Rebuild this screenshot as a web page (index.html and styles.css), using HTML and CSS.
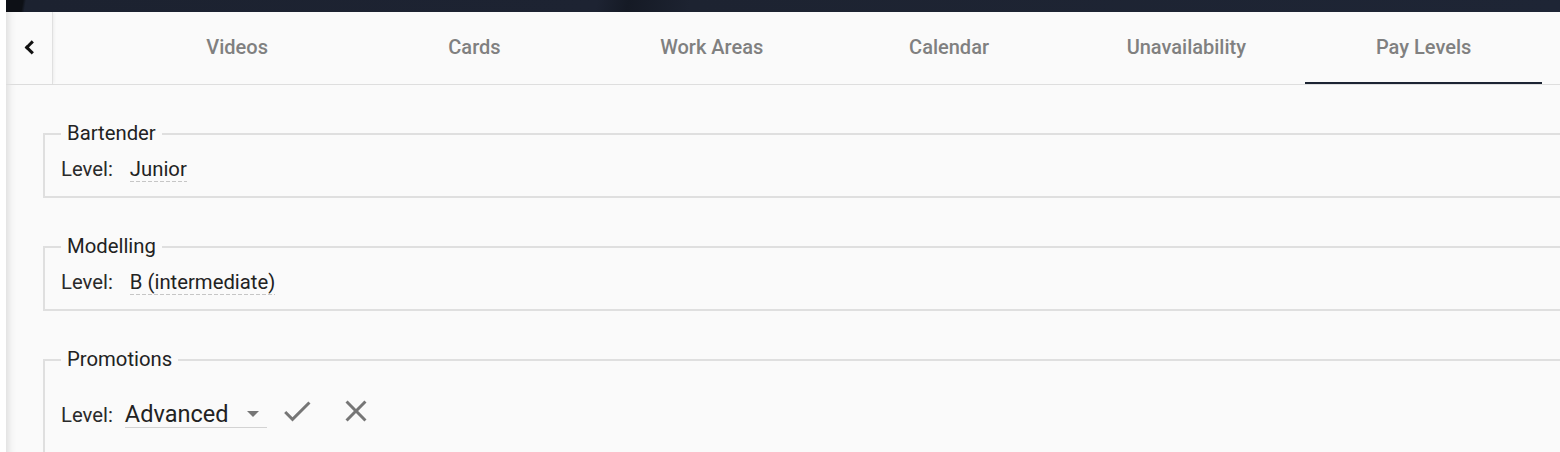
FILE: index.html
```html
<!DOCTYPE html>
<html>
<head>
<meta charset="utf-8">
<link rel="stylesheet" href="styles.css">
</head>
<body>
<div class="app">
  <div class="band"></div>
  <div class="main">
    <div class="tabbar">
      <div class="back"><span class="chev"></span></div>
      <div class="tabs">
        <div class="tab">Videos</div>
        <div class="tab">Cards</div>
        <div class="tab">Work Areas</div>
        <div class="tab">Calendar</div>
        <div class="tab">Unavailability</div>
        <div class="tab active">Pay Levels</div>
      </div>
    </div>
    <div class="content">
      <fieldset class="group">
        <legend>Bartender</legend>
        <div class="row"><span class="label">Level:</span><span class="value">Junior</span></div>
      </fieldset>
      <fieldset class="group">
        <legend>Modelling</legend>
        <div class="row"><span class="label">Level:</span><span class="value">B (intermediate)</span></div>
      </fieldset>
      <fieldset class="group">
        <legend>Promotions</legend>
        <div class="editrow">
          <span class="elabel">Level:</span>
          <div class="select"><span class="seltext">Advanced</span><span class="arrow"></span></div>
          <svg class="icon check" viewBox="0 0 24 24"><path d="M9 16.17L4.83 12l-1.42 1.41L9 19 21 7l-1.41-1.41z"/></svg>
          <svg class="icon close" viewBox="0 0 24 24"><path d="M19 6.41L17.59 5 12 10.59 6.41 5 5 6.41 10.59 12 5 17.59 6.41 19 12 13.41 17.59 19 19 17.59 13.41 12z"/></svg>
        </div>
      </fieldset>
    </div>
  </div>
</div>
</body>
</html>
```
FILE: styles.css
```css
html, body {
  margin: 0;
  height: 100%;
}
body {
  background: #ffffff;
  overflow: hidden;
  font-family: Roboto, "Liberation Sans", sans-serif;
}
.app {
  margin-left: 6px;
  height: 452px;
  display: flex;
  flex-direction: column;
}
.band {
  height: 12px;
  flex: none;
  background: linear-gradient(100deg, #0d1016 0, #0d1016 1.1%, #1c2230 1.3%, #1d2332 38%, #151a25 40%, #1d2331 44%, #1e2535 100%);
}
.main {
  flex: 1;
  background: #fafafa;
  box-shadow: inset 10px 0 8px -8px rgba(0, 0, 0, 0.13);
  overflow: hidden;
}
.tabbar {
  display: flex;
  height: 72px;
  border-bottom: 1px solid #dedede;
}
.back {
  width: 46px;
  flex: none;
  display: flex;
  align-items: center;
  justify-content: center;
  box-shadow: 1px 0 0 #e0e0e0, 3px 0 3px -1px rgba(0, 0, 0, 0.06);
}
.chev {
  width: 6.5px;
  height: 6.5px;
  border-style: solid;
  border-color: #111;
  border-width: 3px 3px 0 0;
  transform: rotate(-135deg);
  margin-left: 5px;
}
.tabs {
  display: flex;
  padding-left: 66.5px;
}
.tab {
  width: 237.3px;
  flex: none;
  display: flex;
  align-items: center;
  justify-content: center;
  padding-bottom: 2px;
  box-sizing: border-box;
  font-size: 20px;
  font-weight: 500;
  color: #808080;
}
.tab.active {
  box-shadow: inset 0 -2px 0 #1c2433;
}
.content {
  padding: 37px 0 0 37px;
}
.group {
  margin: 0 -40px 37px 0;
  padding: 11.5px 16px 14.5px 16px;
  border: 2px solid #dfdfdf;
}
.group legend {
  padding: 0 6px;
  font-size: 20.3px;
  line-height: 23px;
  color: #222;
}
.row {
  display: flex;
  align-items: baseline;
  font-size: 20.3px;
  line-height: 24px;
  color: #2a2a2a;
}
.label {
  margin-right: 17px;
}
.value {
  color: #222;
  padding-bottom: 1px;
  background-image: linear-gradient(to right, #c6c6c6 66%, transparent 0);
  background-size: 6px 1px;
  background-repeat: repeat-x;
  background-position: left bottom;
}
.editrow {
  display: flex;
  align-items: flex-start;
  margin-top: 10px;
  height: 46px;
}
.elabel {
  font-size: 20.3px;
  line-height: 24px;
  color: #2a2a2a;
  margin-top: 10.5px;
  margin-right: 12px;
}
.select {
  margin-top: 8px;
  width: 142px;
  box-sizing: border-box;
  display: flex;
  align-items: center;
  justify-content: space-between;
  padding-right: 8px;
  border-bottom: 1px solid #d3d3d3;
}
.seltext {
  font-size: 23.5px;
  line-height: 26px;
  color: #222;
}
.arrow {
  width: 0;
  height: 0;
  border-left: 6px solid transparent;
  border-right: 6px solid transparent;
  border-top: 6px solid #767676;
  margin-top: 1px;
}
.icon {
  width: 36px;
  height: 36px;
  flex: none;
  fill: #767676;
}
.check {
  margin-left: 12px;
}
.close {
  margin-left: 23.5px;
}
```
